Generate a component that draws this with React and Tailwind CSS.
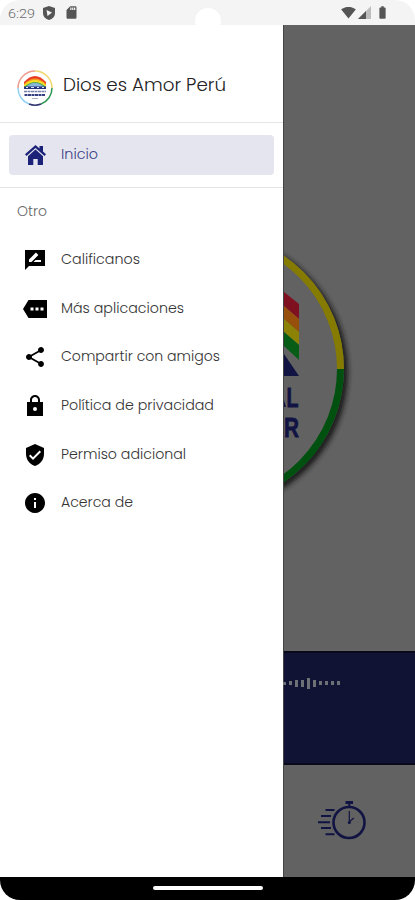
import React from "react";
import { MdBatteryFull, MdInfo, MdSdCard, MdShare, MdSignalWifi4Bar, MdVerifiedUser } from "react-icons/md";

function HomeIcon(props) {
  return (
    <svg viewBox="0 0 21 20" fill="currentColor" {...props}>
      <path d="M10.500 0L0 9.300l1.500 1.700 9-8 9 8L21 9.300l-3-2.700V1h-3.500v2.500z" />
      <path d="M10.500 4.500L3 11.200V20h5.300v-6h4.400v6H18v-8.800z" />
    </svg>
  );
}

function RateIcon(props) {
  return (
    <svg viewBox="0 0 24 24" fill="currentColor" {...props}>
      <path
        fillRule="evenodd"
        d="M2 2h20v16H6l-4 4V2zM6 14h2.500l6.900-6.900-2.500-2.500L6 11.500V14zm12 0v-2h-5.500l-2 2H18z"
      />
    </svg>
  );
}

function MoreIcon(props) {
  return (
    <svg viewBox="0 0 24 24" fill="currentColor" {...props}>
      <path
        fillRule="evenodd"
        d="M24 3H5.500L0 12l5.500 9H24V3zM7.500 10.500h3v3h-3v-3zm5 0h3v3h-3v-3zm5 0h3v3h-3v-3z"
      />
    </svg>
  );
}

function LockIcon(props) {
  return (
    <svg viewBox="0 0 24 24" fill="currentColor" {...props}>
      <path
        fillRule="evenodd"
        d="M20 8h-3V6c0-2.760-2.240-5-5-5S7 3.240 7 6v2H4v14h16V8zM9 6c0-1.660 1.340-3 3-3s3 1.340 3 3v2H9V6zm3 11a2 2 0 1 1 0-4 2 2 0 0 1 0 4z"
      />
    </svg>
  );
}

const menuItems = [
  { label: "Calificanos", icon: RateIcon, width: 79 },
  { label: "Más aplicaciones", icon: MoreIcon, width: 123 },
  { label: "Compartir con amigos", icon: MdShare, width: 159 },
  { label: "Política de privacidad", icon: LockIcon, width: 153 },
  { label: "Permiso adicional", icon: MdVerifiedUser, width: 125 },
  { label: "Acerca de", icon: MdInfo, width: 72 },
];

// Keeps every label at its own width, whichever font is found
function Label({ children, width, size = 14, className = "" }) {
  return (
    <svg width={width + 2} height="24" className={`shrink-0 overflow-visible ${className}`}>
      <text
        x="0"
        y="16"
        fontSize={size}
        textLength={width}
        lengthAdjust="spacingAndGlyphs"
        fill="currentColor"
      >
        {children}
      </text>
    </svg>
  );
}

function StatusBar() {
  return (
    <div className="h-[25px] shrink-0 flex items-center bg-[#f4f4f4] rounded-t-[20px] pl-2 pr-[25px] text-[#555]">
      <Label width={27} size={13.5} className="mt-[3px] font-['Roboto',sans-serif] text-[#6b6b6b]">
        6:29
      </Label>
      <svg viewBox="0 0 12 14" className="ml-[6px] h-[14px] w-3">
        <path d="M6 0l6 2v5c0 3.400-2.500 6-6 7C2.500 13 0 10.400 0 7V2z" fill="#555" />
        <path d="M3.500 4l5.500 2.600L4.500 10z" fill="#f4f4f4" />
      </svg>
      <MdSdCard className="ml-[9px] h-[15px] w-[15px]" />
      {/* Camera cutout */}
      <div className="ml-[116px] mt-[17px] h-[26px] w-[26px] rounded-full bg-white"></div>
      <MdSignalWifi4Bar className="ml-auto h-[15px] w-[15px]" />
      <svg viewBox="0 0 13 13" className="ml-[2px] h-[13px] w-[13px]">
        <path d="M0 13L13 0v13z" fill="#bdbdbd" />
        <path d="M0 13l8-8v8z" fill="#555" />
      </svg>
      <MdBatteryFull className="ml-1 h-[15px] w-[15px]" />
    </div>
  );
}

function Logo() {
  return (
    <svg viewBox="0 0 36 36" className="h-9 w-9 shrink-0">
      <g fill="none" strokeWidth="1.500">
        <path d="M1 18A17 17 0 0 1 18 1" stroke="#ee9c8c" />
        <path d="M18 1a17 17 0 0 1 17 17" stroke="#f2d66c" />
        <path d="M35 18a17 17 0 0 1-11 16" stroke="#2c9650" />
        <path d="M24 34a17 17 0 0 1-12 0" stroke="#30346f" />
        <path d="M12 34A17 17 0 0 1 1 18" stroke="#8fd0f2" />
      </g>
      <path d="M7 17v-5Q18 0 29 12v5z" fill="#e83c28" />
      <path d="M7 17v-3Q18 3 29 14v3z" fill="#f79a1c" />
      <path d="M7 17v-2Q18 5 29 15v2z" fill="#f5df28" />
      <path d="M7 18v-1Q18 7 29 17v1z" fill="#54ad55" />
      <path d="M8 18Q18 8 28 18z" fill="#8ab5dc" />
      <path d="M7 16.500h22V19H7z" fill="#24327e" />
      <path d="M9 17.500h2M14 17.500h3M20 17.500h2M25 17.500h2" stroke="#dce6f5" />
      <path d="M7 21.500h22" stroke="#7880ab" strokeWidth="1.600" strokeDasharray="3 .5" />
      <path d="M7.500 25h21" stroke="#343e82" strokeWidth="2" strokeDasharray="3 .5" />
      <path d="M15 28.500h6" stroke="#aeb2c7" />
    </svg>
  );
}

function Drawer() {
  return (
    <aside className="w-[283px] shrink-0 bg-white flex flex-col text-[#333]">
      <div className="h-[98px] shrink-0 border-b border-[#e4e4e4] flex items-center pl-[17px] pt-7">
        <Logo />
        <Label width={163} size={18} className="ml-[10px] -mt-[2px] text-[#222]">
          Dios es Amor Perú
        </Label>
      </div>

      <div className="h-[65px] shrink-0 border-b border-[#e4e4e4] px-[9px] pt-3">
        <button className="h-10 w-full rounded-[4px] bg-[#e5e5ef] flex items-center pl-[15px] text-[#3a3e85]">
          <HomeIcon className="ml-px h-5 w-[21px] text-[#1b2278]" />
          <Label width={37} className="ml-[15px]">
            Inicio
          </Label>
        </button>
      </div>

      <div className="pl-[17px] pt-3 h-12 text-[#666]">
        <Label width={30}>Otro</Label>
      </div>

      <nav className="flex flex-col">
        {menuItems.map(({ label, icon: Icon, width }) => (
          <button key={label} className="h-[48.600px] flex items-center pl-[23px]">
            <Icon className="h-6 w-6 text-black" />
            <Label width={width} className="ml-[14px]">
              {label}
            </Label>
          </button>
        ))}
      </nav>
    </aside>
  );
}

const bars = [3, 4, 7, 7, 11, 7, 4, 4, 4, 4];

function Player() {
  return (
    <main className="flex-1 min-w-0 flex flex-col bg-[#626262] border-l border-[#454545]">
      <div className="h-[626px] shrink-0">
        {/* Station logo */}
        <svg viewBox="284 25 131 626" className="h-[626px] w-[131px]">
          <defs>
            <filter id="shadow" x="-20%" y="-20%" width="140%" height="140%">
              <feGaussianBlur stdDeviation="2.5" />
            </filter>
          </defs>
          <circle cx="211" cy="372" r="137" fill="#1c1c1c" filter="url(#shadow)" />
          <circle cx="207" cy="369" r="137" fill="#626262" />
          <path d="M207 235.500A133.500 133.500 0 0 1 340.500 369" fill="none" stroke="#857b00" strokeWidth="7" />
          <path d="M340.500 369A133.500 133.500 0 0 1 207 502.500" fill="none" stroke="#00500f" strokeWidth="7" />
          <path d="M284 292l15 12v15l-15-13z" fill="#7f1020" />
          <path d="M284 306l15 13v13l-15-13z" fill="#97500b" />
          <path d="M284 319l15 13v13l-15-13z" fill="#8c8205" />
          <path d="M284 332l15 13v15l-15-14z" fill="#075c16" />
          <path d="M284 354l15 22h-15z" fill="#111442" />
          <g
            fill="#111442"
            fontFamily="'Liberation Sans', sans-serif"
            fontWeight="700"
            stroke="#111442"
            strokeWidth=".8"
          >
            <text x="286.500" y="407" fontSize="27" textLength="12" lengthAdjust="spacingAndGlyphs">
              L
            </text>
            <text x="284" y="437" fontSize="28" textLength="15" lengthAdjust="spacingAndGlyphs">
              R
            </text>
          </g>
          <path d="M284 400l2 7h-2z" fill="#111442" />
        </svg>
      </div>

      <div className="h-[114px] shrink-0 bg-[#101333] border-y-2 border-[#080a1c] pt-[22px]">
        <div className="flex h-4 items-center gap-[3px] -ml-px">
          {bars.map((height, index) => (
            <span key={index} className="w-[3px] bg-[#6d7175]" style={{ height }}></span>
          ))}
        </div>
      </div>

      <div className="flex-1 pl-[33px] pt-[34px]">
        <svg
          viewBox="317 799 50 42"
          className="h-[42px] w-[50px]"
          fill="none"
          stroke="#111442"
          strokeWidth="2"
        >
          <circle cx="349" cy="822.500" r="15.500" strokeWidth="2.600" />
          <path d="M345.500 802.500h7.500" strokeWidth="3" />
          <path d="M349.300 803v4" />
          <path d="M349.300 811v11l4.500-4" strokeWidth="1.200" />
          <circle cx="349.300" cy="822.500" r="1.500" fill="#111442" stroke="none" />
          <path d="M325.500 810h9M321 816h10M318 822.300h12M321 828h10M325.500 834.300h9" />
        </svg>
      </div>
    </main>
  );
}

function App() {
  return (
    <div className="h-[900px] w-[415px] overflow-hidden bg-white flex flex-col font-['Poppins','Inter',sans-serif] font-light">
      <StatusBar />
      <div className="h-[852px] shrink-0 flex">
        <Drawer />
        <Player />
      </div>
      <div className="flex-1 bg-black rounded-b-[20px] flex justify-center pt-[9px]">
        <div className="h-1 w-[110px] rounded-full bg-white"></div>
      </div>
    </div>
  );
}

export default App;
